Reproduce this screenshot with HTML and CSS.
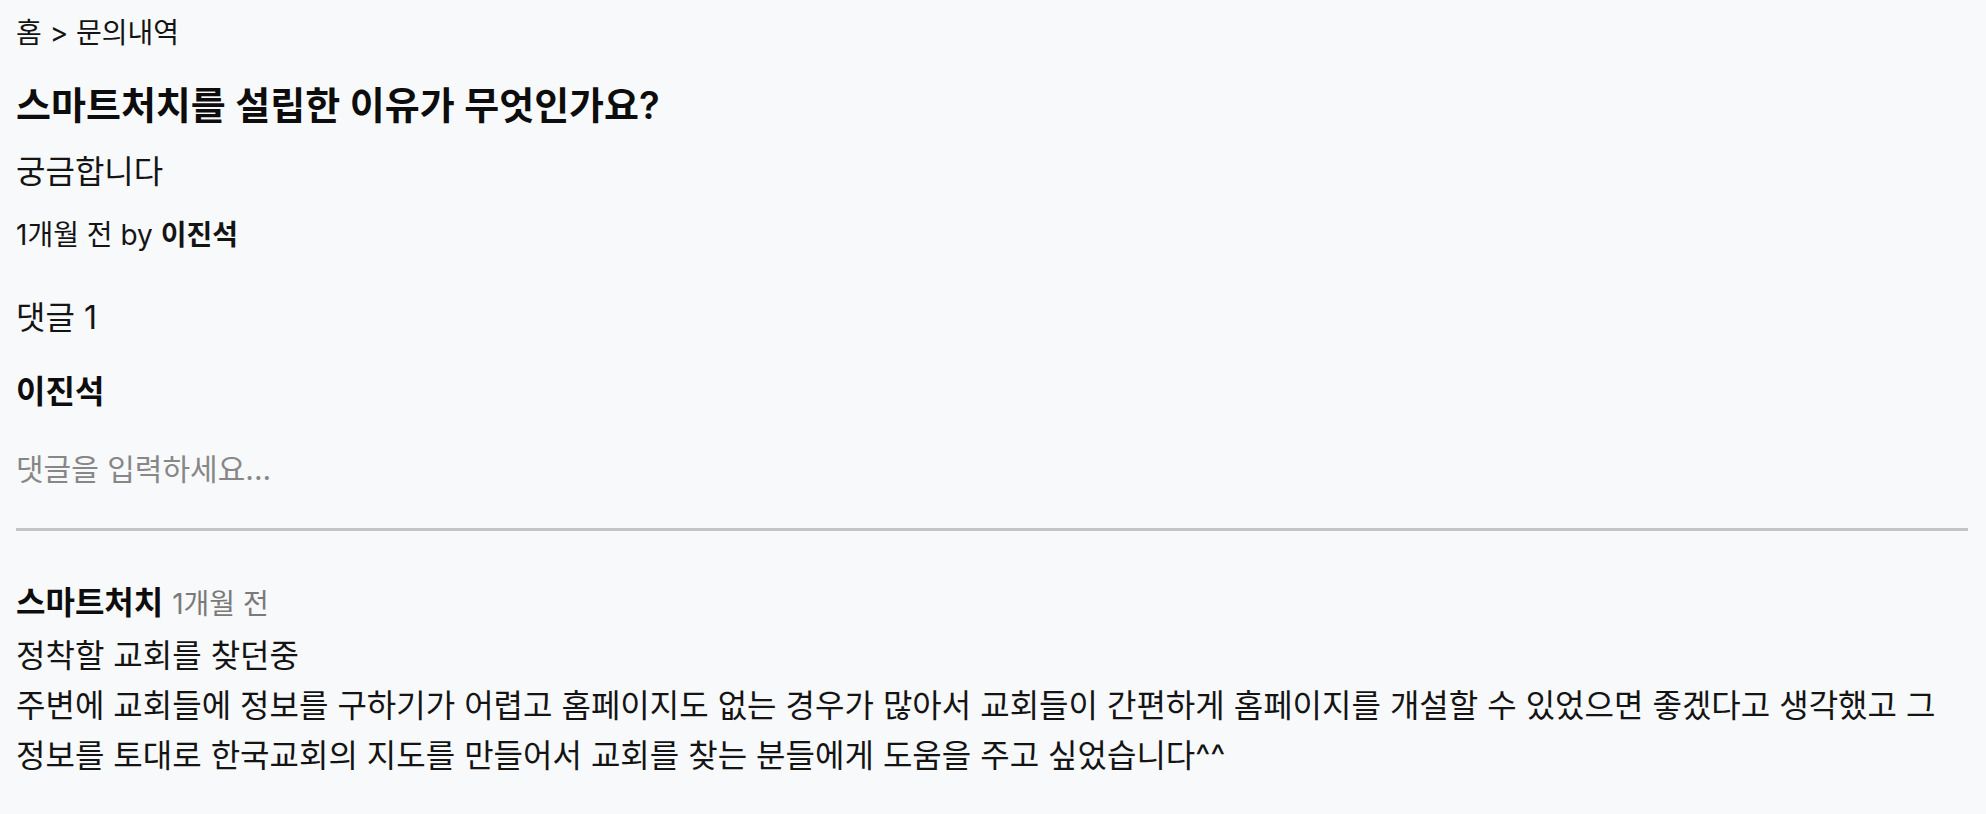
FILE: index.html
```html
<!DOCTYPE html>
<html lang="ko">
<head>
<meta charset="utf-8">
<title>문의내역</title>
<link rel="stylesheet" href="styles.css">
</head>
<body>
<main class="page">
  <nav class="breadcrumb"><a class="crumb" href="#">홈</a> &gt; <span class="crumb">문의내역</span></nav>
  <article class="question">
    <h1 class="q-title">스마트처치를 설립한 이유가 무엇인가요?</h1>
    <p class="q-body">궁금합니다</p>
    <p class="q-meta">1개월 전 by <strong class="q-author">이진석</strong></p>
  </article>
  <section class="comments">
    <h2 class="comments-count">댓글 1</h2>
    <form class="comment-form">
      <div class="form-user">이진석</div>
      <textarea class="comment-input" placeholder="댓글을 입력하세요..."></textarea>
    </form>
    <div class="comment">
      <div class="comment-head"><span class="comment-author">스마트처치</span> <span class="comment-time">1개월 전</span></div>
      <p class="comment-text">정착할 교회를 찾던중<br>주변에 교회들에 정보를 구하기가 어렵고 홈페이지도 없는 경우가 많아서 교회들이 간편하게 홈페이지를 개설할 수 있었으면 좋겠다고 생각했고 그 정보를 토대로 한국교회의 지도를 만들어서 교회를 찾는 분들에게 도움을 주고 싶었습니다^^</p>
    </div>
  </section>
</main>
</body>
</html>
```

FILE: styles.css
```css
html, body {
  margin: 0;
  padding: 0;
  background: #f8f9fb;
}

body {
  font-family: Inter, "Noto Sans CJK KR", sans-serif;
  color: #141414;
}

.page {
  padding: 15px 18px 0 16px;
}

.breadcrumb {
  font-size: 28px;
  line-height: 36px;
  color: #141414;
}

.crumb {
  color: inherit;
  text-decoration: none;
}

.question {
  display: flex;
  flex-direction: column;
}

.q-title {
  margin: 30px 0 0;
  font-size: 38px;
  line-height: 48px;
  font-weight: 600;
  color: #0d0d0d;
}

.q-body {
  margin: 21px 0 0;
  font-size: 32px;
  line-height: 44px;
}

.q-meta {
  margin: 21px 0 0;
  font-size: 28px;
  line-height: 40px;
}

.q-author {
  font-weight: 600;
}

.comments-count {
  margin: 41px 0 0;
  font-size: 32px;
  line-height: 44px;
  font-weight: 400;
}

.comment-form {
  display: flex;
  flex-direction: column;
  margin: 30px 0 0;
}

.form-user {
  font-size: 32px;
  line-height: 44px;
  font-weight: 600;
  color: #0d0d0d;
}

.comment-input {
  display: block;
  margin: 33px 0 0;
  padding: 0;
  height: 81px;
  border: none;
  border-bottom: 3px solid #c4c4c4;
  background: transparent;
  font-family: Inter, "Noto Sans CJK KR", sans-serif;
  font-size: 30px;
  line-height: 44px;
  color: #141414;
  resize: none;
  outline: none;
}

.comment-input::placeholder {
  color: #878787;
}

.comment {
  margin: 50px 0 0;
}

.comment-head {
  font-size: 32px;
  line-height: 44px;
}

.comment-author {
  font-weight: 600;
  color: #0d0d0d;
}

.comment-time {
  font-size: 28px;
  color: #7a7a7a;
}

.comment-text {
  margin: 5px 0 0;
  font-size: 32px;
  line-height: 50px;
}
```
